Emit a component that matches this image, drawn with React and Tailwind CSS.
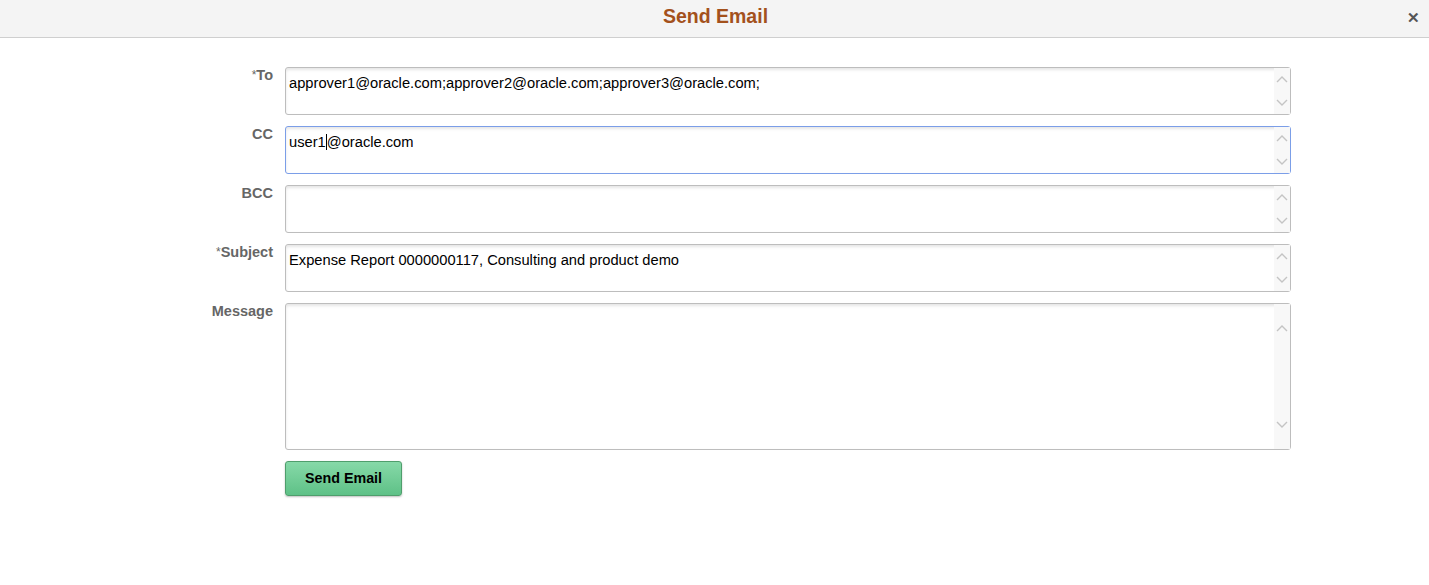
import React from "react";

const Chevron = ({ up }) => (
  <svg width="12" height="8" viewBox="0 0 12 8" className="block">
    <path
      d={up ? "M1 7 L6 2 L11 7" : "M1 1 L6 6 L11 1"}
      fill="none"
      stroke="#c4c4c4"
      strokeWidth="1.4"
    />
  </svg>
);

const Field = ({ label, required, value, height = "h-[48px]", arrows = "py-[7px]", focused, caretAt }) => (
  <div className="flex items-start">
    <div className="w-[285px] pr-[12px] pt-[1px] text-right text-[14.5px] font-bold text-[#666666] leading-[14px]">
      {required && <span className="text-[12px] font-normal align-top">*</span>}
      {label}
    </div>
    <div
      className={`relative w-[1006px] ${height} rounded-[3px] border bg-white shadow-[inset_0_2px_3px_rgba(0,0,0,0.10)] ${
        focused ? "border-[#7b9ee8]" : "border-[#bdbdbd]"
      }`}
    >
      <div className="pl-[3px] pt-[7px] text-[14.7px] leading-[16px] text-black">
        {caretAt != null ? (
          <>
            {value.slice(0, caretAt)}
            <span className="inline-block w-[1px] h-[16px] bg-black align-[-3px]" />
            {value.slice(caretAt)}
          </>
        ) : (
          value
        )}
      </div>
      <div className={`absolute right-0 top-0 bottom-0 w-[16px] bg-[#f8f8f8] flex flex-col justify-between items-center ${arrows}`}>
        <Chevron up />
        <Chevron />
      </div>
    </div>
  </div>
);

export default function App() {
  return (
    <div className="w-[1429px] h-[585px] bg-white" style={{ fontFamily: '"Liberation Sans", Arial, sans-serif' }}>
      <div className="relative h-[38px] bg-[#f4f4f4] border-b border-[#cfcfcf] flex items-center justify-center">
        <span className="text-[19.5px] font-bold text-[#a3511c] ml-[2px] mt-[-3px]">Send Email</span>
        <span className="absolute right-[9px] top-[10px] text-[15px] font-bold text-[#555555] leading-[16px]">✕</span>
      </div>
      <div className="pt-[29px] flex flex-col gap-[11px]">
        <Field
          label="To"
          required
          value="approver1@oracle.com;approver2@oracle.com;approver3@oracle.com;"
        />
        <Field label="CC" value="user1@oracle.com" focused caretAt={5} />
        <Field label="BCC" value="" />
        <Field label="Subject" required value="Expense Report 0000000117, Consulting and product demo" />
        <Field label="Message" value="" height="h-[147px]" arrows="py-[20px]" />
        <div className="pl-[285px]">
          <button className="w-[117px] h-[35px] rounded-[3px] border border-[#4f9e6c] bg-gradient-to-b from-[#86d9a8] to-[#5ec187] text-[14.3px] font-bold text-black shadow-[0_1px_2px_rgba(0,0,0,0.25)]">
            Send Email
          </button>
        </div>
      </div>
    </div>
  );
}
